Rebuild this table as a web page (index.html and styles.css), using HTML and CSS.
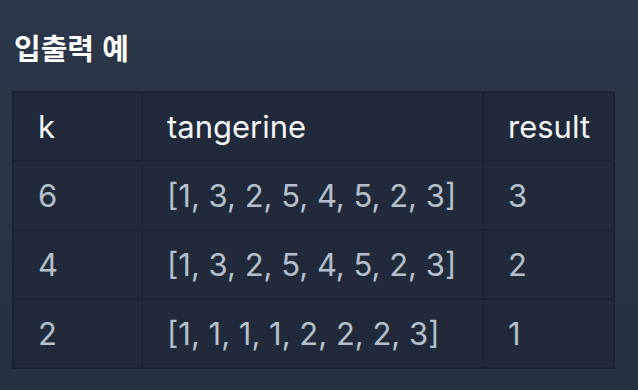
FILE: index.html
```html
<!DOCTYPE html>
<html lang="ko">
<head>
<meta charset="utf-8">
<link rel="stylesheet" href="styles.css">
</head>
<body>
<section class="panel">
  <h5 class="title">입출력 예</h5>
  <table class="examples">
    <thead>
      <tr><th class="c1">k</th><th class="c2">tangerine</th><th class="c3">result</th></tr>
    </thead>
    <tbody>
      <tr><td>6</td><td>[1, 3, 2, 5, 4, 5, 2, 3]</td><td>3</td></tr>
      <tr><td>4</td><td>[1, 3, 2, 5, 4, 5, 2, 3]</td><td>2</td></tr>
      <tr><td>2</td><td>[1, 1, 1, 1, 2, 2, 2, 3]</td><td>1</td></tr>
    </tbody>
  </table>
</section>
</body>
</html>
```
FILE: styles.css
```css
html, body {
  margin: 0;
  padding: 0;
  height: 100%;
}
body {
  background: linear-gradient(#2b3648, #263140);
  font-family: Inter, "Noto Sans", "Noto Sans CJK KR", sans-serif;
  overflow: hidden;
}
.panel {
  padding: 28px 23px 0 12px;
}
.title {
  margin: 0 0 25px 2px;
  font-family: "Noto Sans CJK KR", sans-serif;
  font-size: 29px;
  font-weight: 700;
  line-height: 38px;
  color: #ffffff;
}
.examples {
  width: 603px;
  border-collapse: collapse;
  background: #212a3b;
  border: 2px solid #1b2230;
}
.examples th, .examples td {
  border: 2px solid #1b2230;
  text-align: left;
  padding: 0 0 0 24px;
  height: 67px;
  font-size: 31px;
  font-weight: 400;
}
.examples th {
  color: #f4f6f8;
}
.examples td {
  color: #b6c0cc;
}
.c1 { width: 103px; }
.c2 { width: 315px; }
```
